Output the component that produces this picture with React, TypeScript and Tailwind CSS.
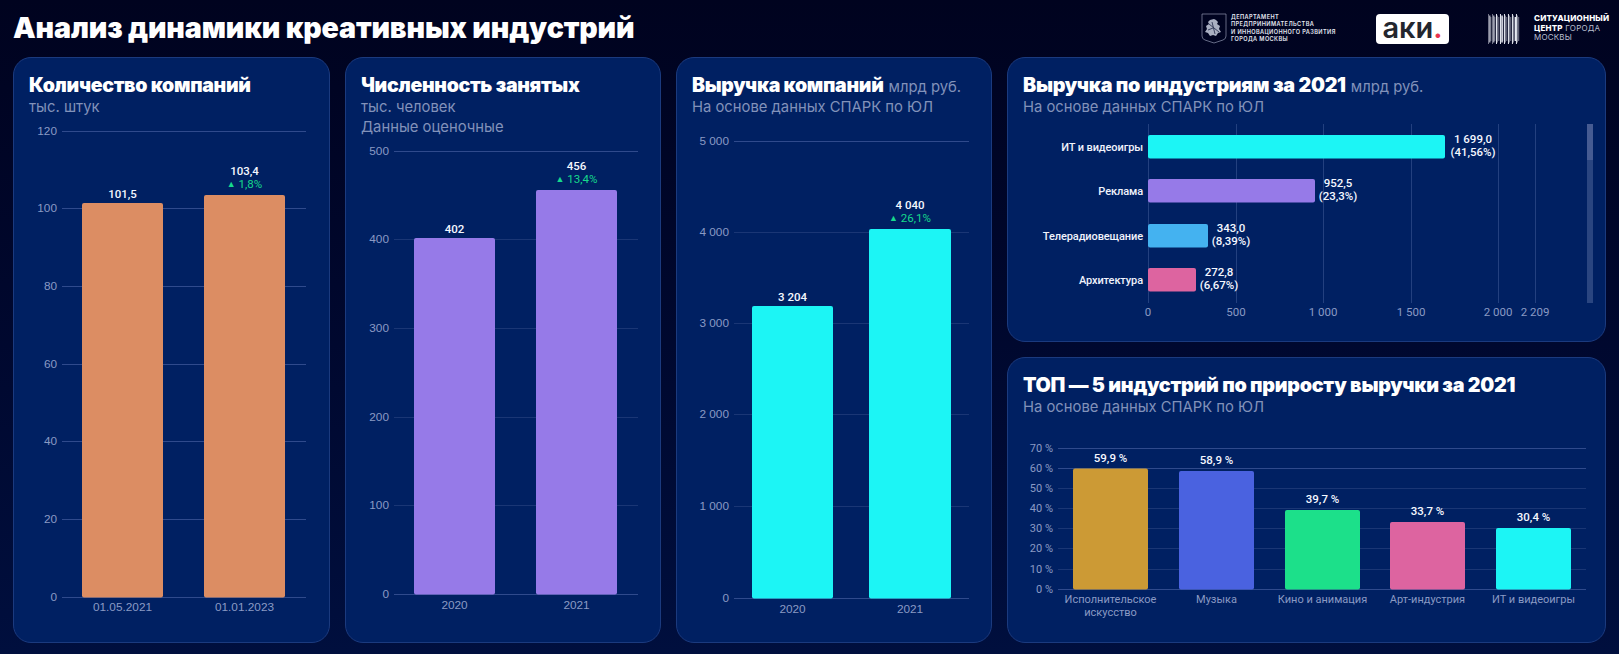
import type { ReactNode } from "react"

const AXIS = "#8a9ac4"

interface Bar {
  x: number
  w: number
  top: number
  fill: string
  value: string
  delta?: string
  label: string | string[]
}

interface VChartProps {
  box: [number, number, number, number]
  gridX: [number, number]
  base: number
  ticks: { y: number; label: string; strong?: boolean }[]
  bars: Bar[]
  labelFont: string
  labelY: number
  tickX: number
  valueGap?: number
}

function VChart({ box, gridX, base, ticks, bars, labelFont, labelY, tickX, valueGap = 5 }: VChartProps) {
  return (
    <svg
      viewBox={box.join(" ")}
      width={box[2]}
      height={box[3]}
      className="mt-auto block shrink-0"
    >
      {ticks.map((t) => (
        <g key={t.label}>
          <line
            x1={gridX[0]}
            x2={gridX[1]}
            y1={t.y + 0.5}
            y2={t.y + 0.5}
            stroke={t.strong ? "#2f4a8c" : "#1a3675"}
          />
          <text
            x={tickX}
            y={t.y + 4}
            textAnchor="end"
            fill={AXIS}
            className={labelFont}
          >
            {t.label}
          </text>
        </g>
      ))}
      {bars.map((b) => {
        const cx = b.x + b.w / 2
        const lines = Array.isArray(b.label) ? b.label : [b.label]
        return (
          <g key={b.value}>
            <rect x={b.x} y={b.top} width={b.w} height={base - b.top + 0.5} rx={2} fill={b.fill} />
            <text
              x={cx}
              y={b.top - (b.delta ? 20 : valueGap)}
              textAnchor="middle"
              fill="#f4f7ff"
              className="font-['Roboto',sans-serif] text-[11.5px] font-medium"
            >
              {b.value}
            </text>
            {b.delta && (
              <text
                x={cx}
                y={b.top - 7}
                textAnchor="middle"
                fill="#16d98c"
                className="font-['Roboto',sans-serif] text-[11.5px]"
              >
                <tspan fontSize="9" dy="-1">▲</tspan>
                <tspan dy="1"> {b.delta}</tspan>
              </text>
            )}
            {lines.map((line, i) => (
              <text
                key={line}
                x={cx}
                y={labelY + i * 13}
                textAnchor="middle"
                fill={AXIS}
                className={labelFont}
              >
                {line}
              </text>
            ))}
          </g>
        )
      })}
    </svg>
  )
}

const hBars = [
  { name: "ИТ и видеоигры", y: 135, x2: 1445, fill: "#1cf5f5", value: "1 699,0", share: "(41,56%)", cx: 1473 },
  { name: "Реклама", y: 179, x2: 1315, fill: "#967ae8", value: "952,5", share: "(23,3%)", cx: 1338 },
  { name: "Телерадиовещание", y: 224, x2: 1208, fill: "#44b2f0", value: "343,0", share: "(8,39%)", cx: 1231 },
  { name: "Архитектура", y: 268, x2: 1196, fill: "#dd64a0", value: "272,8", share: "(6,67%)", cx: 1219 },
]

const hTicks = [
  { x: 1148, label: "0" },
  { x: 1236, label: "500" },
  { x: 1323, label: "1 000" },
  { x: 1411, label: "1 500" },
  { x: 1498, label: "2 000" },
  { x: 1535, label: "2 209" },
]

function HChart() {
  const font = "font-['Roboto',sans-serif] text-[11.5px]"
  const strong = "font-['Roboto',sans-serif] text-[11.5px] font-medium"
  return (
    <svg viewBox="1008 120 597 221" width={597} height={221} className="mt-auto block shrink-0">
      {hTicks.map((t) => (
        <g key={t.label}>
          <line x1={t.x + 0.5} x2={t.x + 0.5} y1={124} y2={303} stroke="#23407f" />
          <text x={t.x} y={316} textAnchor="middle" fill={AXIS} className={font}>
            {t.label}
          </text>
        </g>
      ))}
      {hBars.map((b) => (
        <g key={b.name}>
          <rect x={1148} y={b.y} width={b.x2 - 1148} height={23.5} rx={2} fill={b.fill} />
          <text
            x={1143}
            y={b.y + 16}
            textAnchor="end"
            fill="#f0f3fc"
            className="font-['Roboto',sans-serif] text-[11px] font-medium tracking-[-0.1px]"
          >
            {b.name}
          </text>
          <text x={b.cx} y={b.y + 8} textAnchor="middle" fill="#f4f7ff" className={strong}>
            {b.value}
          </text>
          <text x={b.cx} y={b.y + 21} textAnchor="middle" fill="#f4f7ff" className={strong}>
            {b.share}
          </text>
        </g>
      ))}
      {/* scrollbar */}
      <rect x={1587} y={124} width={6} height={179} fill="#2a4580" />
      <rect x={1587} y={124} width={6} height={36} fill="#465b92" />
    </svg>
  )
}

interface PanelProps {
  title: string
  unit?: string
  subs: string[]
  large?: boolean
  children: ReactNode
}

function Panel({ title, unit, subs, large = false, children }: PanelProps) {
  return (
    <section className="flex min-h-0 flex-col overflow-hidden rounded-[18px] border border-[#1b3a7e] bg-[#002062]">
      <div className="px-[15px] pt-[15px]">
        <h2
          className={`font-['Inter',sans-serif] leading-[24px] font-black tracking-[-0.3px] text-white ${
            large ? "text-[19.75px]" : "text-[19.5px]"
          }`}
        >
          {title}
          {unit && <span className="ml-[5px] text-[14.8px] leading-none font-normal tracking-normal text-[#8292ba]">{unit}</span>}
        </h2>
        {subs.map((s) => (
          <p key={s} className="font-['Inter',sans-serif] text-[14.8px] leading-[20px] text-[#8292ba]">
            {s}
          </p>
        ))}
      </div>
      {children}
    </section>
  )
}

const stripes = [1, 2, 1, 1, 2, 1, 2, 1, 1, 2, 3, 1, 2, 1, 1, 2, 1, 1, 2, 1, 3, 2, 1, 1]

function Logos() {
  return (
    <div className="flex items-center">
      <svg viewBox="0 0 26 31" width={26} height={31} className="mr-[4px]">
        <path d="M1 1h24v22q0 3-3 4l-9 3-9-3q-3-1-3-4z" fill="none" stroke="#8f97b0" strokeWidth="0.7" />
        <path
          d="M13 6l2 1 2 2-1 2 3 2-1 3 2 3-3 1-2 3-3-1-3 1-2-3-3-1 2-3-1-3 3-2-1-2 2-2z"
          fill="#aab0c2"
        />
        <path d="M8 11l10 8M11 9l3 12M7 17l5-2" stroke="#2c3454" strokeWidth="0.9" />
      </svg>
      <div className="w-[110px] font-['Inter',sans-serif] text-[5.6px] leading-[7.4px] font-semibold tracking-[0.4px] text-[#e6e9f2]">
        ДЕПАРТАМЕНТ
        <br />
        ПРЕДПРИНИМАТЕЛЬСТВА
        <br />
        И ИННОВАЦИОННОГО РАЗВИТИЯ
        <br />
        ГОРОДА МОСКВЫ
      </div>
      <div className="ml-[35px] flex h-[30px] w-[73px] items-center justify-center rounded-[4px] bg-white pb-[3px] font-['Inter',sans-serif] text-[29px] leading-none font-semibold text-[#23262e]">
        аки<span className="text-[#e8344e]">.</span>
      </div>
      <svg viewBox="0 0 32 30" width={32} height={30} className="ml-[39px]">
        {stripes.map((w, i) => (
          <rect
            key={i}
            x={i * 1.33}
            y={i % 3 === 0 ? 0 : i % 3 === 1 ? 1.5 : 3}
            width={w * 0.5}
            height={i % 3 === 0 ? 30 : i % 3 === 1 ? 27 : 24}
            fill="#e6e9f2"
          />
        ))}
      </svg>
      <div className="ml-[14px] w-[72px] font-['Inter',sans-serif] text-[8px] leading-[9.6px] tracking-[0.2px] text-[#b9bfd0]">
        <div className="font-extrabold text-white">СИТУАЦИОННЫЙ</div>
        <div>
          <span className="font-extrabold text-white">ЦЕНТР</span> ГОРОДА
        </div>
        <div>МОСКВЫ</div>
      </div>
    </div>
  )
}

export default function App() {
  const narrow = "font-['Liberation_Sans',sans-serif] text-[11.8px]"
  const small = "font-['Roboto',sans-serif] text-[11px]"

  return (
    <div className="h-[654px] w-[1619px] overflow-hidden bg-gradient-to-b from-[#00031f] to-[#000f3e] pr-[13px] pl-[13px]">
      <header className="flex h-[57px] items-center justify-between">
        <h1 className="font-['Inter',sans-serif] text-[28.6px] font-black tracking-[-0.15px] text-white">
          Анализ динамики креативных индустрий
        </h1>
        <Logos />
      </header>

      <div className="grid h-[586px] grid-cols-[317px_316px_316px_599px] gap-[15px]">
        <Panel title="Количество компаний" subs={["тыс. штук"]}>
          <VChart
            box={[14, 120, 315, 522]}
            gridX={[62, 306]}
            base={597}
            tickX={57}
            labelY={611}
            labelFont={narrow}
            ticks={[
              { y: 131, label: "120", strong: true },
              { y: 208, label: "100", strong: true },
              { y: 286, label: "80", strong: true },
              { y: 364, label: "60", strong: true },
              { y: 441, label: "40", strong: true },
              { y: 519, label: "20", strong: true },
              { y: 597, label: "0", strong: true },
            ]}
            bars={[
              { x: 82, w: 81, top: 203, fill: "#dc8d63", value: "101,5", label: "01.05.2021" },
              { x: 204, w: 81, top: 195, fill: "#dc8d63", value: "103,4", delta: "1,8%", label: "01.01.2023" },
            ]}
          />
        </Panel>

        <Panel title="Численность занятых" subs={["тыс. человек", "Данные оценочные"]}>
          <VChart
            box={[346, 140, 314, 502]}
            gridX={[394, 638]}
            base={594}
            tickX={389}
            labelY={609}
            labelFont={narrow}
            ticks={[
              { y: 151, label: "500", strong: true },
              { y: 239, label: "400" },
              { y: 328, label: "300" },
              { y: 417, label: "200" },
              { y: 505, label: "100" },
              { y: 594, label: "0", strong: true },
            ]}
            bars={[
              { x: 414, w: 81, top: 238, fill: "#967ae8", value: "402", label: "2020" },
              { x: 536, w: 81, top: 190, fill: "#967ae8", value: "456", delta: "13,4%", label: "2021" },
            ]}
          />
        </Panel>

        <Panel title="Выручка компаний" unit="млрд руб." subs={["На основе данных СПАРК по ЮЛ"]}>
          <VChart
            box={[677, 130, 314, 512]}
            gridX={[734, 969]}
            base={598}
            tickX={729}
            labelY={613}
            labelFont={narrow}
            ticks={[
              { y: 141, label: "5 000", strong: true },
              { y: 232, label: "4 000" },
              { y: 323, label: "3 000" },
              { y: 414, label: "2 000" },
              { y: 506, label: "1 000" },
              { y: 598, label: "0", strong: true },
            ]}
            bars={[
              { x: 752, w: 81, top: 306, fill: "#1cf5f5", value: "3 204", label: "2020" },
              { x: 869, w: 82, top: 229, fill: "#1cf5f5", value: "4 040", delta: "26,1%", label: "2021" },
            ]}
          />
        </Panel>

        <div className="grid min-h-0 grid-rows-[285px_286px] gap-[15px]">
          <Panel large title="Выручка по индустриям за 2021" unit="млрд руб." subs={["На основе данных СПАРК по ЮЛ"]}>
            <HChart />
          </Panel>
          <Panel large title="ТОП — 5 индустрий по приросту выручки за 2021" subs={["На основе данных СПАРК по ЮЛ"]}>
            <VChart
              box={[1008, 440, 597, 202]}
              gridX={[1058, 1586]}
              base={589}
              tickX={1053}
              labelY={603}
              labelFont={small}
              valueGap={7}
              ticks={[
                { y: 448, label: "70 %", strong: true },
                { y: 468, label: "60 %", strong: true },
                { y: 488, label: "50 %" },
                { y: 508, label: "40 %" },
                { y: 528, label: "30 %" },
                { y: 548, label: "20 %" },
                { y: 569, label: "10 %" },
                { y: 589, label: "0 %", strong: true },
              ]}
              bars={[
                { x: 1073, w: 75, top: 468.5, fill: "#cc9a35", value: "59,9 %", label: ["Исполнительское", "искусство"] },
                { x: 1179, w: 75, top: 471, fill: "#4a62e0", value: "58,9 %", label: "Музыка" },
                { x: 1285, w: 75, top: 510, fill: "#1ce08a", value: "39,7 %", label: "Кино и анимация" },
                { x: 1390, w: 75, top: 522, fill: "#dd64a0", value: "33,7 %", label: "Арт-индустрия" },
                { x: 1496, w: 75, top: 528, fill: "#1cf5f5", value: "30,4 %", label: "ИТ и видеоигры" },
              ]}
            />
          </Panel>
        </div>
      </div>
    </div>
  )
}
